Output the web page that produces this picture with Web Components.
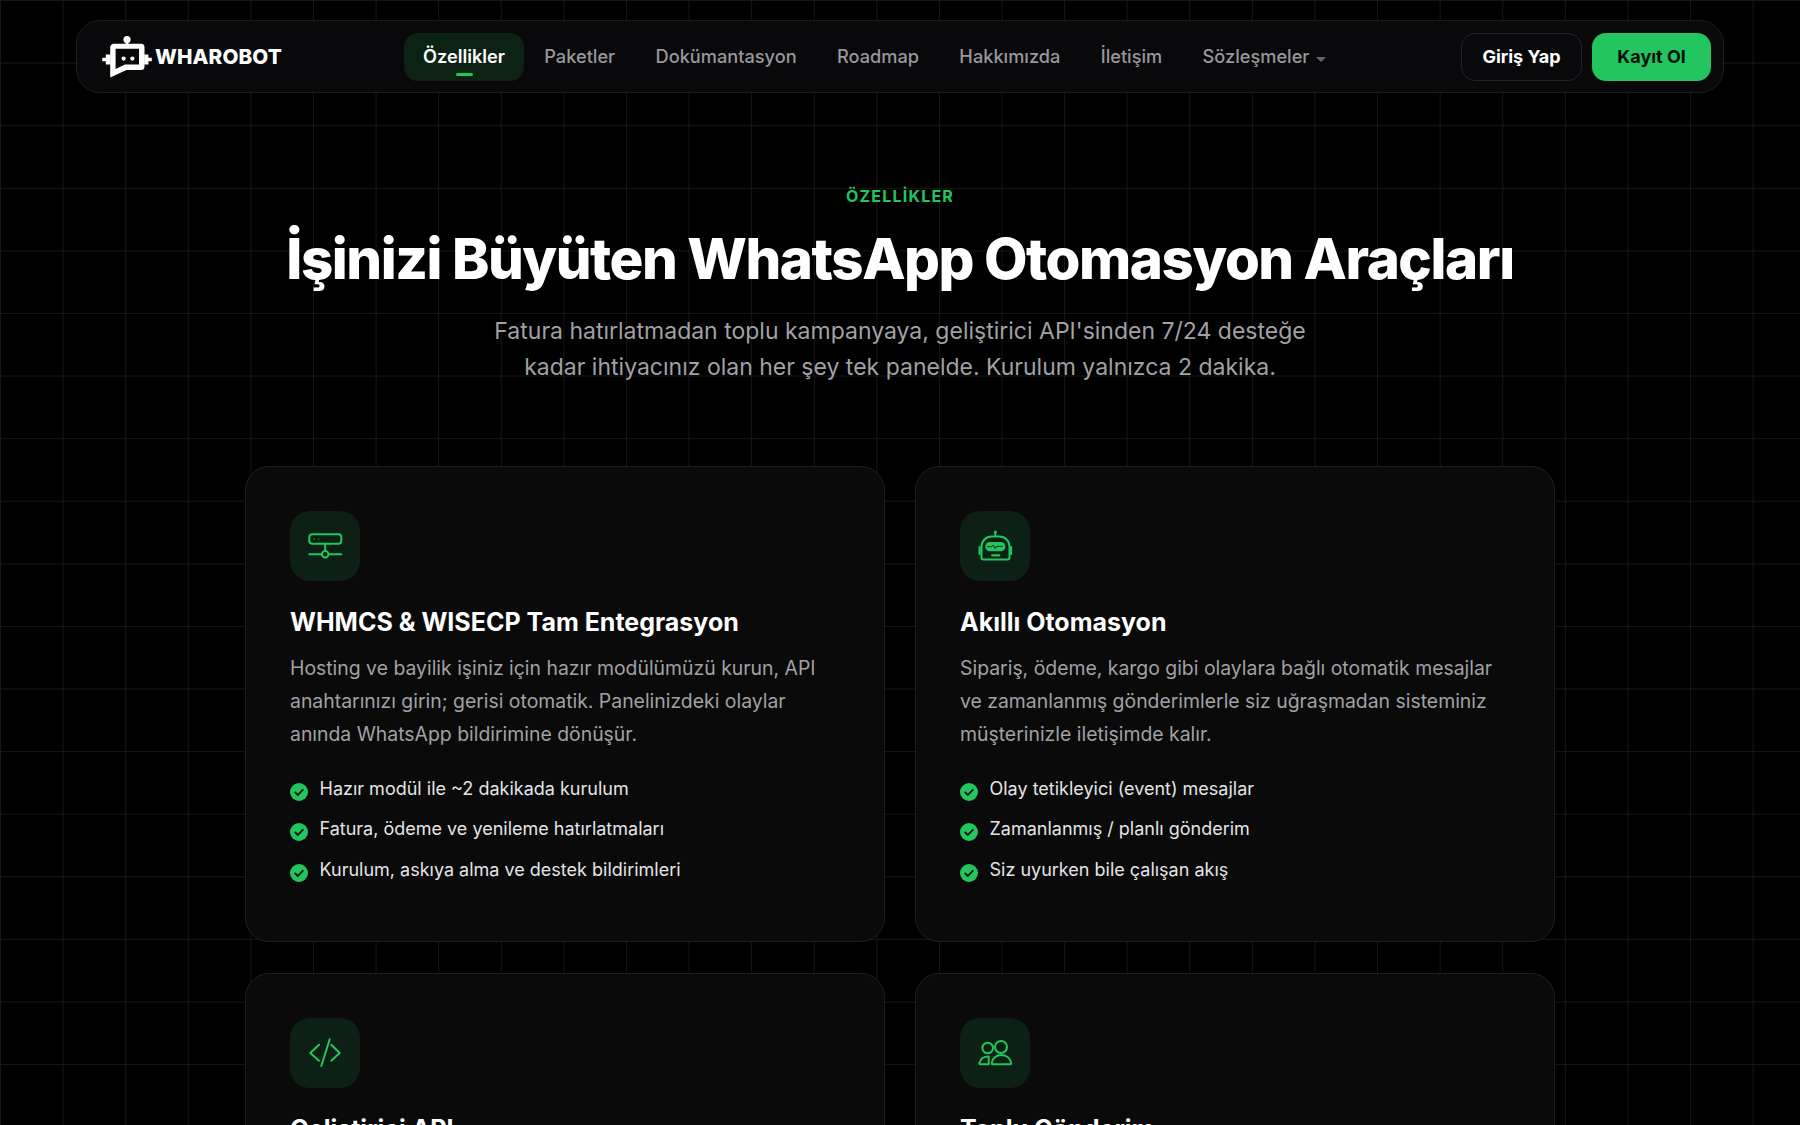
<!DOCTYPE html>
<html lang="tr"><head><meta charset="utf-8"><title>Wharobot</title>
<style>
html,body{margin:0;height:1125px;overflow:hidden;background:#000;color:#fff;font-family:Inter,"Liberation Sans",sans-serif}
</style></head><body>
<wh-page>
<wh-nav></wh-nav>
<wh-heading kicker="ÖZELLİKLER" title="İşinizi Büyüten WhatsApp Otomasyon Araçları">Fatura hatırlatmadan toplu kampanyaya, geliştirici API'sinden 7/24 desteğe<br>kadar ihtiyacınız olan her şey tek panelde. Kurulum yalnızca 2 dakika.</wh-heading>
<wh-grid>
<wh-card heading="WHMCS &amp; WISECP Tam Entegrasyon" icon="server" desc="Hosting ve bayilik işiniz için hazır modülümüzü kurun, API anahtarınızı girin; gerisi otomatik. Panelinizdeki olaylar anında WhatsApp bildirimine dönüşür.">
<wh-check>Hazır modül ile ~2 dakikada kurulum</wh-check><wh-check>Fatura, ödeme ve yenileme hatırlatmaları</wh-check><wh-check>Kurulum, askıya alma ve destek bildirimleri</wh-check>
</wh-card>
<wh-card heading="Akıllı Otomasyon" icon="robot" desc="Sipariş, ödeme, kargo gibi olaylara bağlı otomatik mesajlar ve zamanlanmış gönderimlerle siz uğraşmadan sisteminiz müşterinizle iletişimde kalır.">
<wh-check>Olay tetikleyici (event) mesajlar</wh-check><wh-check>Zamanlanmış / planlı gönderim</wh-check><wh-check>Siz uyurken bile çalışan akış</wh-check>
</wh-card>
<wh-card heading="Geliştirici API" icon="code"></wh-card>
<wh-card heading="Toplu Gönderim" icon="users"></wh-card>
</wh-grid>
</wh-page>
<script>
const def=(n,css,html)=>customElements.define(n,class extends HTMLElement{connectedCallback(){if(this.shadowRoot)return;const r=this.attachShadow({mode:'open'});r.innerHTML='<style>'+css+'</style>'+(typeof html==='function'?html(this):html);}});
def('wh-page',`:host{display:block;height:1125px;overflow:hidden;padding-top:20px;box-sizing:border-box;
 background-color:#000;background-image:linear-gradient(#171717 1px,transparent 1px),linear-gradient(90deg,#171717 1px,transparent 1px);background-size:62.6px 62.6px;background-position:0 0}`,'<slot></slot>');
const LOGO=`<svg width="50" height="42" viewBox="0 0 50 42" fill="#fff"><circle cx="25" cy="3.6" r="3.6"/><rect x="23.7" y="5" width="2.6" height="5"/><path fill-rule="evenodd" d="M12 7.8H39a3.5 3.5 0 0 1 3.5 3.5V30.5a3.5 3.5 0 0 1-3.5 3.5H24.5L8.2 41.4V11.3A3.5 3.5 0 0 1 12 7.8ZM13.6 12.8V33L23 28.6H37V12.8Z"/><circle cx="21.6" cy="22.6" r="2.1"/><circle cx="30.4" cy="22.6" r="2.1"/><path d="M3.8 18.5H8.5V28.5H3.8V25.3H.3V21.7H3.8ZM42.2 18.5H46.4V21.7H49.8V25.3H46.4V28.5H42.2Z"/></svg>`;
def('wh-link',`:host{display:block;position:relative;padding:0 20.2px;height:48px;line-height:46.5px;border-radius:14px;font-size:18.2px;font-weight:500;color:#98989d;white-space:nowrap}
:host([active]){padding:0 19px;background:#0c2214;color:#fff;font-weight:600}
:host([active])::after{content:"";position:absolute;left:50%;bottom:5px;width:17px;height:3px;margin-left:-8.5px;border-radius:2px;background:#22c55e}
svg{margin-left:7px;vertical-align:1px}`,el=>'<slot></slot>'+(el.hasAttribute('caret')?'<svg width="10" height="5" viewBox="0 0 10 5"><path d="M0 0H10L5 5Z" fill="#66666b"/></svg>':''));
def('wh-nav',`:host{display:block;width:1648px;height:73px;margin:0 auto;box-sizing:border-box;background:#09090b;border:1px solid #1c1c1e;border-radius:24px;padding:0 12px 0 25px}
.row{display:flex;align-items:center;height:100%}
.brand{display:flex;align-items:center;gap:3px;width:302px;font-weight:800;font-size:20.7px;letter-spacing:.1px;color:#fff}
nav{display:flex;align-items:center;flex:1}
.acts{display:flex;gap:10px}
.btn{height:48px;box-sizing:border-box;border-radius:14px;font-size:18px;font-weight:700;display:flex;align-items:center;justify-content:center}
.ghost{width:121px;border:1px solid #242426;color:#fff}
.pri{width:119px;background:#22c55e;color:#06120a}`,
`<div class="row"><div class="brand">${LOGO}<span>WHAROBOT</span></div><nav><wh-link active>Özellikler</wh-link><wh-link>Paketler</wh-link><wh-link>Dokümantasyon</wh-link><wh-link>Roadmap</wh-link><wh-link>Hakkımızda</wh-link><wh-link>İletişim</wh-link><wh-link caret>Sözleşmeler</wh-link></nav><div class="acts"><div class="btn ghost">Giriş Yap</div><div class="btn pri">Kayıt Ol</div></div></div>`);
def('wh-heading',`:host{display:block;text-align:center;margin-top:92px}
.k{font-size:16px;font-weight:700;letter-spacing:1.2px;color:#22c55e;line-height:22px}
h1{margin:17.3px 0 0;font-size:56.4px;line-height:70px;font-weight:800;letter-spacing:-1.46px;color:#fff}
p{margin:18.5px 0 0;font-size:23px;line-height:36.5px;color:#a1a1a6}`,
el=>`<div class="k">${el.getAttribute('kicker')}</div><h1>${el.getAttribute('title')}</h1><p><slot></slot></p>`);
def('wh-grid',`:host{display:grid;grid-template-columns:640px 640px;gap:31px 30px;justify-content:center;margin-top:80.4px}`,'<slot></slot>');
const IC={
server:`<rect x="2.3" y="6.3" width="32" height="9.4" rx="3"/><path d="M18.2 15.7V23M2.3 26.3H14.7M22 26.3H34.3"/><circle cx="18.2" cy="26.3" r="3.3"/><path d="M7.3 11h.1M11.7 11h.1" stroke-width="1.4" opacity=".7"/>`,
robot:`<path d="M18.3 4V8.3"/><circle cx="18.3" cy="4" r="1.5" fill="#22c55e" stroke="none"/><path d="M6.5 31.5H30.5a2 2 0 0 0 2-2V18.5A10 10 0 0 0 22.5 8.5H14.5A10 10 0 0 0 4.5 18.5V29.5a2 2 0 0 0 2 2Z"/><rect x="8.3" y="14" width="20" height="9.3" rx="4.6" fill="#22c55e" stroke="none"/><path d="M10.5 18.7h4.2l1.4-1.7 2 3.6 1.5-2.2h5.8" stroke="#0d2015" stroke-width=".9"/><path d="M15 27.3h7.3" stroke-width="2.2"/><path d="M2.6 19v7" stroke-width="2.2"/><path d="M34 19v7" stroke-width="2.2"/>`,
code:`<path d="M12 9.7 3.3 18 12 25.7M24.3 9.7 32.7 18 24.3 25.7M22.7 4.3 14.3 31"/>`,
users:`<circle cx="10.7" cy="13" r="5.3"/><circle cx="24" cy="12" r="6"/><path d="M11.7 21.5V29.3H3.5Q2 29.3 2.5 27.5C3.5 24 7 21.5 11.7 21.5Z"/><path d="M16 29.3H33Q34.5 29.3 34 27.5C33 23 29 20 24.3 20C19.7 20 15.7 23 14.8 27.5Q14.5 29.3 16 29.3Z"/>`};
def('wh-card',`:host{display:block;height:476px;box-sizing:border-box;background:#0a0a0a;border:1px solid #1f1f21;border-radius:24px;padding:44px}
.i{width:70px;height:70px;border-radius:20px;background:#0d2015;display:flex;align-items:center;justify-content:center}
svg{width:36px;height:36px;fill:none;stroke:#22c55e;stroke-width:2;stroke-linecap:round;stroke-linejoin:round}
h3{margin:24px 0 0;font-size:25px;line-height:34px;font-weight:700;color:#fff}
p{margin:13px 0 0;font-size:19.4px;line-height:33px;color:#a1a1a6}
ul{display:block;margin:23.5px 0 0;padding:0}`,
el=>`<div class="i"><svg viewBox="0 0 36 36">${IC[el.getAttribute('icon')]}</svg></div><h3>${el.getAttribute('heading')}</h3><p>${el.getAttribute('desc')||''}</p><ul><slot></slot></ul>`);
def('wh-check',`:host{display:flex;align-items:flex-start;gap:11.5px;font-size:18px;line-height:28px;height:40.7px;color:#e4e4e7}
svg{flex:none;margin-top:8px}`,
`<svg width="18" height="18" viewBox="0 0 18 18"><circle cx="9" cy="9" r="9" fill="#22c55e"/><path d="M5.2 9.4 7.8 12l5-5.2" fill="none" stroke="#07130b" stroke-width="1.8" stroke-linecap="round" stroke-linejoin="round"/></svg><span><slot></slot></span>`);
</script></body></html>
